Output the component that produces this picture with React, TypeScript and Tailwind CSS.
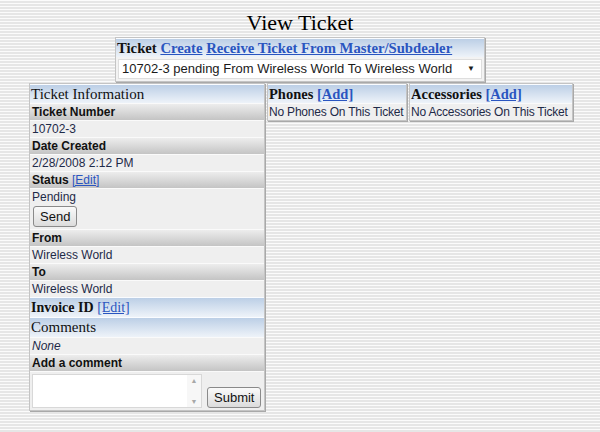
import React from "react";

const serif = "font-['Liberation_Serif','Times_New_Roman',serif]";
const blueHead =
  "bg-[linear-gradient(to_bottom,#bccfe6,#eef3f9)] text-[#111] border-t border-[#fafcff]";
const grayHead =
  "bg-[linear-gradient(to_bottom,#ededed,#c4c4c4)] font-bold text-[12px] leading-[16px] px-[2px] text-[#111] border-t border-[#fafafa]";
const valueRow =
  "bg-[#efefef] text-[12px] leading-[16px] px-[2px] text-[#1e2a48] border-t border-[#fafafa] whitespace-nowrap";
const link = "text-[#2a55c0] underline";

function Label({ children }: { children: React.ReactNode }) {
  return <div className={grayHead}>{children}</div>;
}

function Value({ children, className }: { children: React.ReactNode; className?: string }) {
  return <div className={`${valueRow} ${className ?? ""}`}>{children}</div>;
}

function Button({ label, className }: { label: string; className?: string }) {
  return (
    <button
      className={`rounded-[3px] border border-[#8a8a8a] bg-[linear-gradient(to_bottom,#fafafa,#dcdcdc)] px-[6px] text-[13px] leading-[19px] text-[#111] ${className ?? ""}`}
    >
      {label}
    </button>
  );
}

export default function App() {
  return (
    <div className="min-h-[432px] w-[600px] bg-[repeating-linear-gradient(to_bottom,#fbfbfb_0px,#fbfbfb_1px,#e6e6e6_1px,#e6e6e6_3px)] pt-[9px] font-['Liberation_Sans',Arial,sans-serif]">
      <h1 className={`${serif} text-center text-[22px] leading-[28px] text-black`}>View Ticket</h1>

      {/* ticket picker */}
      <div className="mx-auto w-[370px] border border-[#c4c4c4] bg-[#f3f3f3] shadow-[1px_1px_0_#a9a9a9]">
        <div className={`${blueHead} ${serif} px-[1px] text-[14.7px] font-bold leading-[18px]`}>
          Ticket <a className={link}>Create</a> <a className={link}>Receive Ticket From Master/Subdealer</a>
        </div>
        <div className="p-[2px]">
          <div className="flex h-[20px] items-center justify-between border border-[#dedede] bg-white pl-[3px] pr-[6px] text-[13px] text-[#1a1a1a]">
            <span>10702-3 pending From Wireless World To Wireless World</span>
            <span className="text-[8px]">▼</span>
          </div>
        </div>
      </div>

      <div className="mt-[1px] flex items-start justify-center gap-[2px] pl-[2px]">
        {/* ticket information */}
        <div className="w-[236px] border border-[#c4c4c4] bg-[#efefef] shadow-[1px_1px_0_#a9a9a9]">
          <div className={`${blueHead} ${serif} px-[1px] text-[15px] leading-[18px]`}>Ticket Information</div>
          <Label>Ticket Number</Label>
          <Value>10702-3</Value>
          <Label>Date Created</Label>
          <Value>2/28/2008 2:12 PM</Value>
          <Label>
            Status <a className={`${link} font-normal`}>[Edit]</a>
          </Label>
          <div className={`${valueRow} pb-[2px]`}>
            <div>Pending</div>
            <Button label="Send" className="mt-[1px] ml-[1px]" />
          </div>
          <Label>From</Label>
          <Value>Wireless World</Value>
          <Label>To</Label>
          <Value>Wireless World</Value>
          <div className={`${blueHead} ${serif} px-[1px] text-[14px] font-bold leading-[19px]`}>
            Invoice ID <a className={`${link} font-normal`}>[Edit]</a>
          </div>
          <div className={`${blueHead} ${serif} px-[1px] text-[15px] leading-[19px]`}>Comments</div>
          <div className={`${valueRow} italic`}>None</div>
          <Label>Add a comment</Label>
          <div className="flex items-end gap-[5px] border-t border-[#fafafa] px-[2px] pt-[2px] pb-[2px]">
            <div className="flex h-[34px] w-[170px] border border-[#d8d8d8] bg-white">
              <textarea className="h-full flex-1 resize-none outline-none" />
              <div className="flex w-[14px] flex-col items-center justify-between bg-[#f7f7f7] py-[1px] text-[7px] leading-[9px] text-[#a8a8a8]">
                <span>▲</span>
                <span>▼</span>
              </div>
            </div>
            <Button label="Submit" />
          </div>
        </div>

        {/* phones */}
        <div className="w-[140px] border border-[#c4c4c4] bg-[#efefef] shadow-[1px_1px_0_#a9a9a9]">
          <div className={`${blueHead} ${serif} px-[1px] text-[14.5px] font-bold leading-[18px]`}>
            Phones <a className={link}>[Add]</a>
          </div>
          <Value className="!px-[1px] tracking-[-0.2px]">No Phones On This Ticket</Value>
        </div>

        {/* accessories */}
        <div className="w-[164px] border border-[#c4c4c4] bg-[#efefef] shadow-[1px_1px_0_#a9a9a9]">
          <div className={`${blueHead} ${serif} px-[1px] text-[14.5px] font-bold leading-[18px]`}>
            Accessories <a className={link}>[Add]</a>
          </div>
          <Value className="!px-[1px] tracking-[-0.2px]">No Accessories On This Ticket</Value>
        </div>
      </div>
    </div>
  );
}
